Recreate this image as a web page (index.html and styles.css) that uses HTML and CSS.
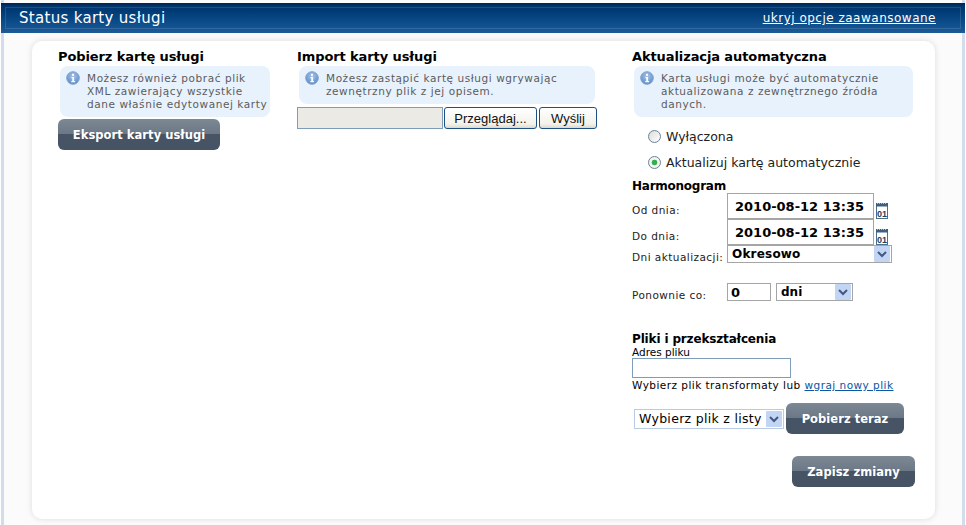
FILE: index.html
```html
<!DOCTYPE html>
<html lang="pl">
<head>
<meta charset="utf-8">
<title>Status karty usługi</title>
<link rel="stylesheet" href="styles.css">
</head>
<body>
<svg class="defs" width="0" height="0" aria-hidden="true">
  <defs>
    <radialGradient id="ig" cx="50%" cy="35%" r="65%">
      <stop offset="0" stop-color="#a9c6ea"/><stop offset="1" stop-color="#5b8ac6"/>
    </radialGradient>
    <symbol id="info" viewBox="0 0 14 14">
      <circle cx="7" cy="7" r="6.3" fill="url(#ig)" stroke="#7fa3d2"/>
      <rect x="6" y="2.8" width="2" height="2" fill="#fff"/>
      <path d="M5.5 6h2.6v4h1v1.2H5.3V10h1V7.2h-.8z" fill="#fff"/>
    </symbol>
    <symbol id="cal" viewBox="0 0 12 17">
      <rect x="0.5" y="3" width="11" height="13.5" fill="#fff" stroke="#4d6f8f"/>
      <rect x="0" y="1" width="12" height="3.5" fill="#3d5f80"/>
      <path d="M1 1.5h10" stroke="#b8c4ce" stroke-dasharray="1 1" stroke-width="1"/>
      <text x="6" y="14.8" text-anchor="middle" class="caltext">01</text>
    </symbol>
    <symbol id="arrow" viewBox="0 0 16 16">
      <rect width="16" height="16" rx="1" fill="#c3d5f5"/>
      <path d="M4 6l4 4 4-4" fill="none" stroke="#44587f" stroke-width="2"/>
    </symbol>
  </defs>
</svg>

<div class="page">
  <header class="bar">
    <h1 class="bar-title">Status karty usługi</h1>
    <a class="bar-link" href="#">ukryj opcje zaawansowane</a>
  </header>

  <main class="card">
    <section class="col col-export">
      <h2 class="head">Pobierz kartę usługi</h2>
      <div class="note note-export">
        <svg class="note-icon"><use href="#info"/></svg>
        <p>Możesz również pobrać plik XML zawierający wszystkie dane właśnie edytowanej karty</p>
      </div>
      <a class="btn btn-export" href="#">Eksport karty usługi</a>
    </section>

    <section class="col col-import">
      <h2 class="head">Import karty usługi</h2>
      <div class="note note-import">
        <svg class="note-icon"><use href="#info"/></svg>
        <p>Możesz zastąpić kartę usługi wgrywając zewnętrzny plik z jej opisem.</p>
      </div>
      <div class="upload">
        <span class="upload-path"></span>
        <button class="xp xp-browse" type="button">Przeglądaj...</button>
        <button class="xp xp-send" type="button">Wyślij</button>
      </div>
    </section>

    <section class="col col-auto">
      <h2 class="head">Aktualizacja automatyczna</h2>
      <div class="note note-auto">
        <svg class="note-icon"><use href="#info"/></svg>
        <p>Karta usługi może być automatycznie aktualizowana z zewnętrznego źródła danych.</p>
      </div>

      <div class="radios">
        <label class="radio"><span class="radio-dot"></span><span>Wyłączona</span></label>
        <label class="radio"><span class="radio-dot radio-on"></span><span>Aktualizuj kartę automatycznie</span></label>
      </div>

      <h3 class="subhead subhead-plan">Harmonogram</h3>
      <div class="row row-date">
        <span class="lbl lbl-wide">Od dnia:</span>
        <span class="field field-date">2010-08-12 13:35</span>
        <svg class="cal"><use href="#cal"/></svg>
      </div>
      <div class="row row-date">
        <span class="lbl lbl-wide">Do dnia:</span>
        <span class="field field-date">2010-08-12 13:35</span>
        <svg class="cal"><use href="#cal"/></svg>
      </div>
      <div class="row row-days">
        <span class="lbl lbl-wide">Dni aktualizacji:</span>
        <span class="field field-select field-days">Okresowo<svg class="arrow"><use href="#arrow"/></svg></span>
      </div>
      <div class="row row-again">
        <span class="lbl lbl-wide">Ponownie co:</span>
        <span class="field field-num">0</span>
        <span class="field field-select field-unit">dni<svg class="arrow"><use href="#arrow"/></svg></span>
      </div>

      <h3 class="subhead subhead-files">Pliki i przekształcenia</h3>
      <div class="small">Adres pliku</div>
      <span class="addr"></span>
      <div class="small small-choose">Wybierz plik transformaty lub <a href="#">wgraj nowy plik</a></div>
      <div class="row row-fetch">
        <span class="picker">Wybierz plik z listy<svg class="arrow"><use href="#arrow"/></svg></span>
        <a class="btn btn-fetch" href="#">Pobierz teraz</a>
      </div>
      <div class="row row-save">
        <a class="btn btn-save" href="#">Zapisz zmiany</a>
      </div>
    </section>
  </main>
</div>
</body>
</html>
```
FILE: styles.css
```css
* { box-sizing: border-box; }
html, body { margin: 0; padding: 0; }
body {
  width: 966px;
  height: 525px;
  overflow: hidden;
  background: #fff;
  font-family: "DejaVu Sans", Verdana, sans-serif;
  font-size: 11px;
  color: #000;
}
.defs { display: block; height: 0; }
.caltext { font: bold 9px "Liberation Sans", sans-serif; fill: #1d3f60; }

.page {
  width: 964px;
  height: 525px;
  margin-left: 1px;
  padding-top: 3px;
  background: #fbfbfb;
  border-left: 3px solid #d3dcea;
  border-right: 3px solid #d3dcea;
}

.bar {
  height: 30px;
  margin: 0 -3px;
  display: flex;
  align-items: center;
  justify-content: space-between;
  padding: 0 29px 0 18px;
  background: linear-gradient(#002f66 0, #003a75 25%, #0a4a88 60%, #1c5b97 100%);
  box-shadow: inset 0 2px 0 #00285a;
  outline: 1px solid rgba(255,255,255,.12);
  outline-offset: -5px;
}
.bar-title { margin: 0; font-size: 15px; font-weight: normal; color: #fff; letter-spacing: .3px; }
.bar-link { color: #fff; font-size: 12px; letter-spacing: .5px; }

.card {
  display: flex;
  width: 903px;
  height: 478px;
  margin: 8px 0 0 28px;
  padding: 8px 0 0 26px;
  background: #fff;
  border-radius: 10px;
  box-shadow: 0 0 6px rgba(0,0,0,.13);
}
.col-export { width: 239px; }
.col-import { width: 335px; }
.col-auto { width: 283px; }

.head { margin: 0; font-size: 13px; line-height: 16px; font-weight: bold; letter-spacing: -.1px; }
.note {
  display: flex;
  margin: 1px 0 0 2px;
  padding: 4px 2px 0 6px;
  background: #e8f2fd;
  border-radius: 8px;
  color: #5c5c5c;
  font-size: 10.5px;
  line-height: 13px;
}
.note p { margin: 2px 0 0; letter-spacing: .57px; }
.note-icon { width: 14px; height: 14px; flex: none; margin-right: 7px; margin-top: 1px; }
.note-export { width: 210px; height: 51px; }
.note-import { width: 296px; height: 38px; }
.note-auto { width: 279px; height: 51px; padding-right: 30px; }

.btn {
  display: flex;
  align-items: center;
  justify-content: center;
  height: 31px;
  border-radius: 6px;
  background: linear-gradient(#7c8894 0, #6c7885 48%, #475465 50%, #465364 100%);
  color: #fff;
  font-size: 11.5px;
  font-weight: bold;
  text-decoration: none;
  letter-spacing: .05px;
}
.btn-export { width: 162px; margin-top: 2px; }
.btn-fetch { width: 118px; margin-left: 2px; }
.btn-save { width: 123px; margin-left: 160px; }

.upload { display: flex; margin-top: 3px; height: 22px; }
.upload-path {
  width: 146px;
  background: #ebeae4;
  border: 1px solid #7f9db9;
}
.xp {
  font-family: "Liberation Sans", sans-serif;
  font-size: 13px;
  padding: 0;
  color: #111;
  background: linear-gradient(#fff, #f3f2ea 80%, #dcd8cc);
  border: 1px solid #1d5185;
  border-radius: 3px;
  margin-left: 1px;
}
.xp-browse { width: 93px; }
.xp-send { width: 58px; margin-left: 2px; }

.radios { margin: 9px 0 0 16px; }
.radio { display: flex; align-items: center; height: 20px; margin-bottom: 5px; font-size: 12.5px; color: #222; }
.radio + .radio { margin-top: 6px; margin-bottom: 0; }
.radio-dot {
  width: 13px; height: 13px; flex: none; margin-right: 5px;
  border: 1px solid #6a8199; border-radius: 50%;
  background: linear-gradient(135deg, #dcdcd6, #fff);
}
.radio-on { background: radial-gradient(circle, #30b050 0 2.5px, #f4f4ef 3.2px); }

.subhead { margin: 0; font-size: 12px; line-height: 13px; font-weight: bold; letter-spacing: -.25px; }
.subhead-plan { margin-top: 8px; }
.row { display: flex; align-items: center; }
.lbl { font-size: 10.5px; color: #222; flex: none; letter-spacing: .45px; }
.lbl-wide { width: 95px; }
.row-date { height: 26px; }
.row-date .lbl { margin-top: 8px; }
.field {
  display: flex;
  align-items: center;
  background: #fff;
  border: 1px solid #a5a5a5;
  font-weight: bold;
  flex: none;
}
.field-date { width: 147px; height: 26px; font-size: 13px; padding-left: 7px; }
.cal { width: 12px; height: 17px; margin: 8px 0 0 2px; flex: none; }
.row-days { height: 18px; }
.row-days .lbl { margin-top: 6px; }
.field-select { justify-content: space-between; padding: 0 1px 0 4px; }
.field-days { width: 165px; height: 18px; font-size: 12px; letter-spacing: .2px; }
.arrow { width: 16px; height: 16px; flex: none; }
.row-again { margin-top: 20px; height: 18px; }
.row-again .lbl { margin-top: 6px; }
.field-num { width: 44px; height: 18px; font-size: 13px; padding-left: 3px; }
.field-unit { width: 77px; height: 18px; margin-left: 5px; font-size: 12px; }

.subhead-files { margin-top: 32px; letter-spacing: -.15px; }
.small { font-size: 10.5px; line-height: 12px; }
.addr { display: block; width: 159px; height: 20px; background: #fff; border: 1px solid #7f9db9; }
.small-choose { margin-top: 1px; letter-spacing: .46px; }
.small-choose a { color: #0a57a4; }
.row-fetch { margin-top: 12px; }
.picker {
  display: flex; align-items: center; justify-content: space-between;
  width: 150px; height: 20px; margin-left: 2px; padding: 0 1px 0 4px;
  border: 1px solid #b9cbe2; font-size: 12.5px; letter-spacing: .3px;
}
.row-save { margin-top: 22px; }
```
